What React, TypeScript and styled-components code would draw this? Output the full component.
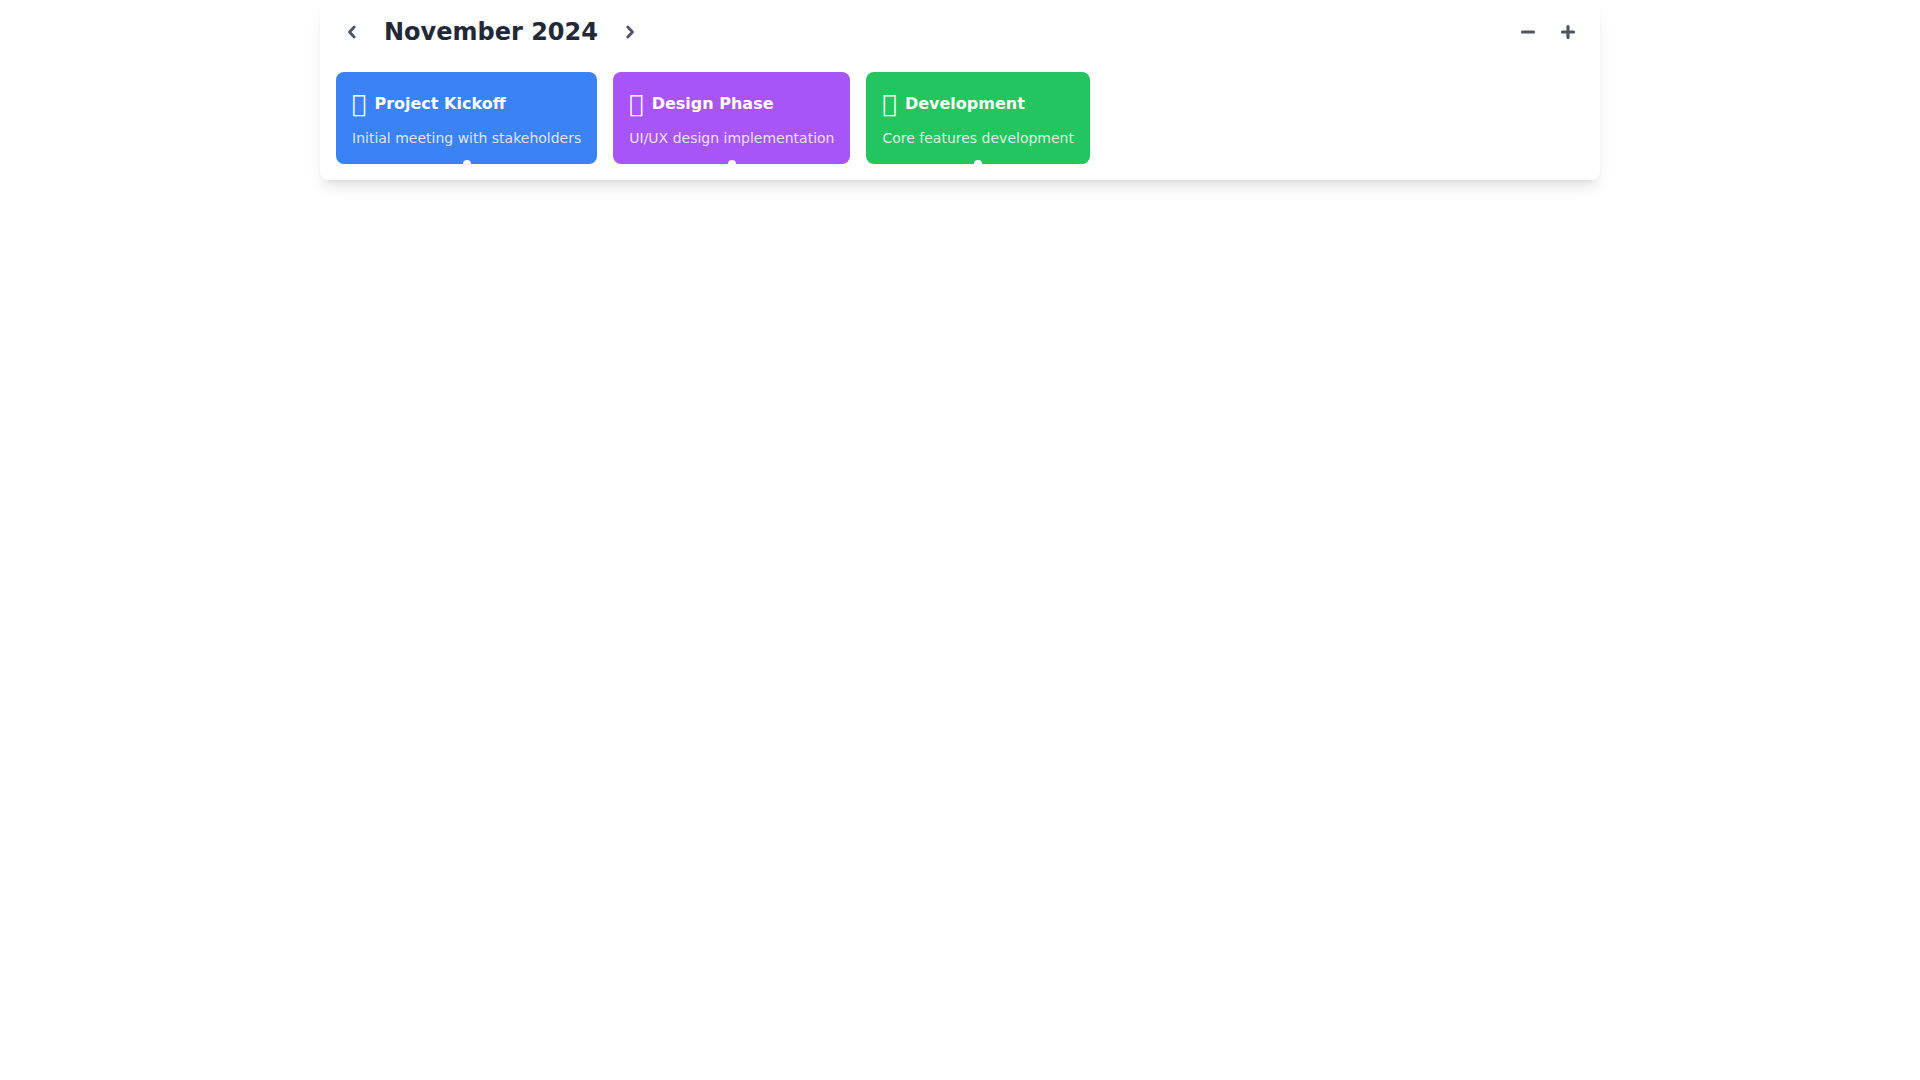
import React from "react";
import styled, { createGlobalStyle } from "styled-components";

const Global = createGlobalStyle`
  html, body { margin: 0; padding: 0; background: #fff; font-family: "DejaVu Sans", sans-serif; }
  #root { min-height: 100vh; }
`;

const Panel = styled.section`
  width: 1280px;
  margin: 0 auto;
  padding: 16px;
  box-sizing: border-box;
  background: #fff;
  border-radius: 8px;
  box-shadow: 0 10px 15px -3px rgba(0,0,0,.1), 0 4px 6px -4px rgba(0,0,0,.1);
`;

const Header = styled.header`
  display: flex;
  align-items: center;
  justify-content: space-between;
  height: 32px;
  margin-bottom: 24px;
`;

const Group = styled.div<{ $gap: number }>`
  display: flex;
  align-items: center;
  gap: ${p => p.$gap}px;
`;

const IconButton = styled.button`
  width: 32px;
  height: 32px;
  padding: 0;
  margin: 0;
  display: flex;
  align-items: center;
  justify-content: center;
  background: transparent;
  border: 0;
  border-radius: 9999px;
  color: #4b5563;
`;

const Title = styled.h1`
  margin: 0;
  font-size: 24px;
  line-height: 32px;
  font-weight: 700;
  color: #1f2937;
`;

const Track = styled.div`
  display: flex;
  gap: 16px;
`;

const Event = styled.article<{ $bg: string }>`
  position: relative;
  padding: 16px;
  border-radius: 8px;
  color: #fff;
  background: ${p => p.$bg};
`;

const EventHead = styled.div`
  display: flex;
  align-items: center;
  gap: 8px;
  margin-bottom: 8px;
`;

const Glyph = styled.span`
  font-family: "Font Awesome 6 Free", "DejaVu Sans", sans-serif;
  font-size: 24px;
  line-height: 32px;
  font-style: normal;
`;

const EventTitle = styled.h3`
  margin: 0;
  font-size: 16px;
  line-height: 24px;
  font-weight: 700;
`;

const EventText = styled.p`
  margin: 0;
  font-size: 14px;
  line-height: 20px;
  opacity: .8;
  white-space: nowrap;
`;

const Dot = styled.span`
  position: absolute;
  left: 50%;
  bottom: -4px;
  width: 8px;
  height: 8px;
  border-radius: 50%;
  background: #fff;
  transform: translateX(-50%);
`;

const Icon = ({ d, w = 3.2 }: { d: string; w?: number }) => (
  <svg width="16" height="16" viewBox="0 0 16 16" fill="none" stroke="currentColor" strokeWidth={w} strokeLinecap="round" strokeLinejoin="round">
    <path d={d} />
  </svg>
);

const events = [
  { title: "Project Kickoff", text: "Initial meeting with stakeholders", bg: "#3b82f6", icon: "\uf135" },
  { title: "Design Phase", text: "UI/UX design implementation", bg: "#a855f7", icon: "\uf53f" },
  { title: "Development", text: "Core features development", bg: "#22c55e", icon: "\uf121" },
];

export default function App() {
  return (
    <>
      <Global />
      <Panel>
        <Header>
          <Group $gap={16}>
            <IconButton aria-label="Previous"><Icon d="M10.2 3 L5.5 8 L10.2 13" w={2.8} /></IconButton>
            <Title>November 2024</Title>
            <IconButton aria-label="Next"><Icon d="M5.8 3 L10.5 8 L5.8 13" w={2.8} /></IconButton>
          </Group>
          <Group $gap={8}>
            <IconButton aria-label="Zoom out"><Icon d="M2.5 8 H13.5" /></IconButton>
            <IconButton aria-label="Zoom in"><Icon d="M2.5 8 H13.5 M8 2.5 V13.5" /></IconButton>
          </Group>
        </Header>
        <Track>
          {events.map(e => (
            <Event key={e.title} $bg={e.bg}>
              <EventHead>
                <Glyph>{e.icon}</Glyph>
                <EventTitle>{e.title}</EventTitle>
              </EventHead>
              <EventText>{e.text}</EventText>
              <Dot />
            </Event>
          ))}
        </Track>
      </Panel>
    </>
  );
}
